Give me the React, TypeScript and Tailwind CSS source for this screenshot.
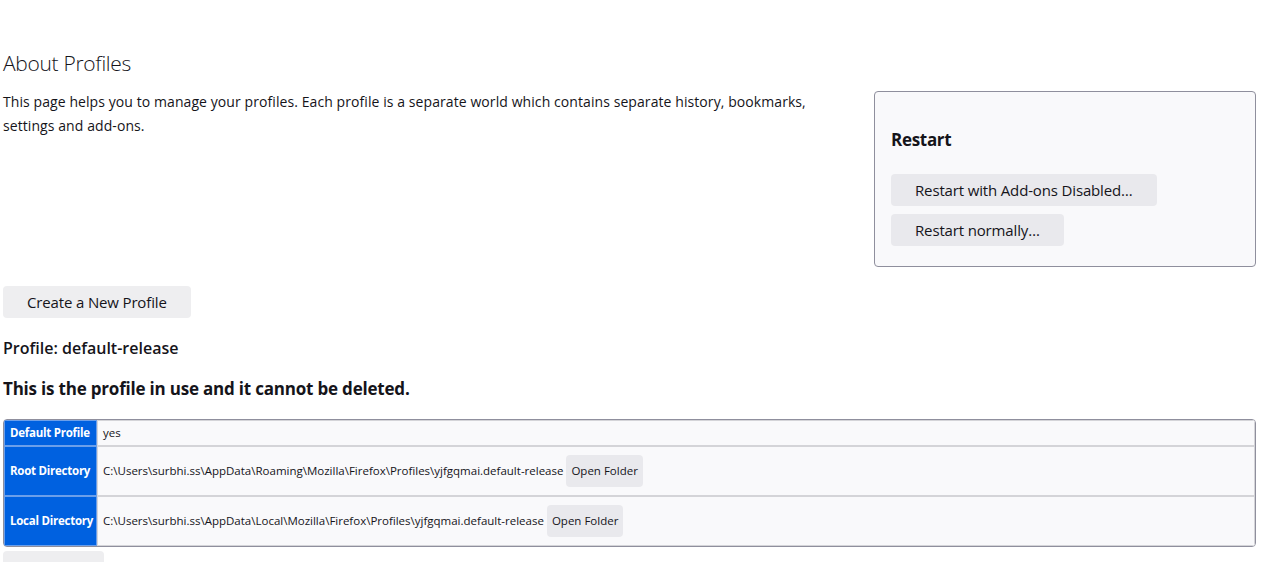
import React from "react";

const font = { fontFamily: '"Open Sans", "Noto Sans", sans-serif' };

function HeaderCell({ children, tall }: { children: React.ReactNode; tall?: boolean }) {
  return (
    <th
      className={`bg-[#0061e0] text-white text-[11.5px] font-bold text-left border border-[#6b9fea] pl-[5px] pr-[3px] whitespace-nowrap tracking-[-0.25px] ${tall ? "h-[50px]" : "h-[26px]"}`}
    >
      {children}
    </th>
  );
}

function DataCell({ children, tall }: { children: React.ReactNode; tall?: boolean }) {
  return (
    <td className={`bg-[#f9f9fb] text-[11.5px] text-[#15141a] border border-[#d4d4d8] px-[5px] w-full ${tall ? "h-[50px]" : "h-[26px]"}`}>
      {children}
    </td>
  );
}

export default function App() {
  return (
    <div className="bg-white min-h-[562px] w-[1281px] overflow-hidden text-[#15141a]" style={font}>
      <div className="pt-[48px] pl-[3px] pr-[25px]">
        <h1 className="text-[21px] leading-[30px] font-light tracking-[-0.3px]">About Profiles</h1>
        <div className="flex items-start">
          <div className="flex-1 pt-[12px]">
            <p className="text-[14px] leading-[24px] tracking-[0.08px]">
              This page helps you to manage your profiles. Each profile is a separate world which contains separate history, bookmarks,
              <br />
              settings and add-ons.
            </p>
          </div>
          <div className="w-[382px] mt-[13px] border border-[#8f8f9d] rounded-[4px] bg-[#f9f9fb] pt-[36px] pb-[20px] px-[16px]">
            <h2 className="text-[17px] leading-[24px] font-bold tracking-[-0.3px]">Restart</h2>
            <div className="mt-[22px] flex flex-col items-start gap-[8px]">
              <button className="h-[32px] px-[24px] rounded-[4px] bg-[#e9e9ed] text-[15px] tracking-[-0.15px]">
                Restart with Add-ons Disabled…
              </button>
              <button className="h-[32px] px-[24px] rounded-[4px] bg-[#e9e9ed] text-[15px] tracking-[-0.15px]">
                Restart normally…
              </button>
            </div>
          </div>
        </div>
        <button className="mt-[19px] h-[32px] px-[24px] rounded-[4px] bg-[#eeeef0] text-[15px] tracking-[-0.15px]">
          Create a New Profile
        </button>
        <h2 className="mt-[18px] text-[16px] leading-[24px] font-semibold tracking-[0px]">Profile: default-release</h2>
        <h3 className="mt-[17px] text-[17px] leading-[24px] font-bold tracking-[-0.2px]">
          This is the profile in use and it cannot be deleted.
        </h3>
        <div className="mt-[18px] border border-[#8f8f9d] rounded-[4px] overflow-hidden">
          <table className="w-full border-separate border-spacing-0">
            <tbody>
              <tr>
                <HeaderCell>Default Profile</HeaderCell>
                <DataCell>yes</DataCell>
              </tr>
              <tr>
                <HeaderCell tall>Root Directory</HeaderCell>
                <DataCell tall>
                  <span className="inline-flex items-center gap-[3px] whitespace-nowrap">
                    <span>C:\Users\surbhi.ss\AppData\Roaming\Mozilla\Firefox\Profiles\yjfgqmai.default-release</span>
                    <button className="h-[32px] px-[5px] rounded-[4px] bg-[#e9e9ed] text-[11.5px]">Open Folder</button>
                  </span>
                </DataCell>
              </tr>
              <tr>
                <HeaderCell tall>Local Directory</HeaderCell>
                <DataCell tall>
                  <span className="inline-flex items-center gap-[3px] whitespace-nowrap">
                    <span>C:\Users\surbhi.ss\AppData\Local\Mozilla\Firefox\Profiles\yjfgqmai.default-release</span>
                    <button className="h-[32px] px-[5px] rounded-[4px] bg-[#e9e9ed] text-[11.5px]">Open Folder</button>
                  </span>
                </DataCell>
              </tr>
            </tbody>
          </table>
        </div>
        <button className="mt-[4px] h-[32px] w-[101px] rounded-[4px] bg-[#eeeef0]"></button>
      </div>
    </div>
  );
}
